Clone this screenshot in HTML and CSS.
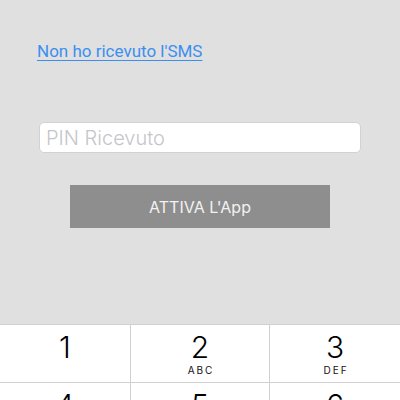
FILE: index.html
```html
<!DOCTYPE html>
<html lang="it">
<head>
    <meta charset="UTF-8">
    <meta name="viewport" content="width=device-width, initial-scale=1.0">
    <title>Attivazione</title>
    <link rel="stylesheet" href="styles.css">
</head>
<body>
    <main class="activation">
        <a class="sms-link" href="#">Non ho ricevuto l'SMS</a>

        <input class="pin-input" type="text" placeholder="PIN Ricevuto">

        <button class="activate-btn" type="button">ATTIVA L'App</button>
    </main>

    <div class="keypad">
        <div class="key"><span class="digit">1</span><span class="letters">&nbsp;</span></div>
        <div class="key"><span class="digit">2</span><span class="letters">ABC</span></div>
        <div class="key"><span class="digit">3</span><span class="letters">DEF</span></div>
        <div class="key"><span class="digit">4</span><span class="letters">GHI</span></div>
        <div class="key"><span class="digit">5</span><span class="letters">JKL</span></div>
        <div class="key"><span class="digit">6</span><span class="letters">MNO</span></div>
    </div>
</body>
</html>
```

FILE: styles.css
```css
html, body {
    height: 100%;
}

body {
    background-color: #e0e0e0;
    font-family: Inter, "Liberation Sans", Arial, sans-serif;
    margin: 0;
    padding: 0;
    display: flex;
    flex-direction: column;
    overflow: hidden;
}

.activation {
    display: flex;
    flex-direction: column;
    padding-top: 40px;
}

.sms-link {
    align-self: flex-start;
    margin-left: 37px;
    color: #3b8ff0;
    font-family: Roboto, Inter, sans-serif;
    font-size: 17px;
    line-height: 22px;
    text-decoration: underline;
    text-underline-offset: 3px;
}

.pin-input {
    margin: 60px 39px 0;
    height: 31px;
    box-sizing: border-box;
    border: 1px solid #d2d2d2;
    border-radius: 5px;
    background-color: #ffffff;
    padding: 0 6px;
    font-family: inherit;
    font-size: 20px;
    font-weight: 300;
    outline: none;
}

.pin-input::placeholder {
    color: #c5c5ca;
}

.activate-btn {
    margin: 32px 70px 0;
    height: 43px;
    border: none;
    background-color: #8e8e8e;
    color: #f2f2f2;
    font-family: inherit;
    font-size: 16px;
}

.keypad {
    margin-top: 96px;
    display: grid;
    grid-template-columns: 130px 1fr 130px;
    grid-auto-rows: 57px;
    gap: 1px;
    background-color: #d0d0d0;
    border-top: 1px solid #d0d0d0;
}

.key {
    background-color: #ffffff;
    display: flex;
    flex-direction: column;
    align-items: center;
    padding-top: 5px;
}

.digit {
    font-size: 30px;
    line-height: 34px;
    color: #000000;
    font-weight: 300;
}

.letters {
    font-size: 10px;
    line-height: 12px;
    letter-spacing: 2px;
    color: #111111;
    padding-left: 2px;
}
```
